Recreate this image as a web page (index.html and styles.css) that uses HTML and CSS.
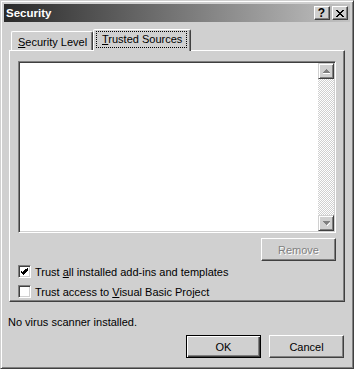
FILE: index.html
```html
<!DOCTYPE html>
<html lang="en">
<head>
	<meta charset="UTF-8">
	<title>Security</title>
	<link rel="stylesheet" href="styles.css">
</head>
<body>
<div class="window">
	<div class="titlebar">
		<span class="title">Security</span>
		<div class="caption-btns">
			<span class="cap-btn help">?</span>
			<span class="cap-btn close">
				<svg width="8" height="7" viewBox="0 0 8 7" shape-rendering="crispEdges"><path fill="#000" d="M0 0h2v1h-2zM6 0h2v1h-2zM1 1h2v1h-2zM5 1h2v1h-2zM2 2h4v1h-4zM3 3h2v1h-2zM2 4h4v1h-4zM1 5h2v1h-2zM5 5h2v1h-2zM0 6h2v1h-2zM6 6h2v1h-2z"/></svg>
			</span>
		</div>
	</div>
	<div class="body">
		<div class="tabs">
			<div class="tab"><u>S</u>ecurity Level</div>
			<div class="tab active"><span class="focus"><u>T</u>rusted Sources</span></div>
		</div>
		<div class="panel">
			<div class="listbox">
				<div class="list-area"></div>
				<div class="scrollbar">
					<div class="sb-btn"><svg width="7" height="5" viewBox="0 0 7 5" shape-rendering="crispEdges"><path fill="#808080" d="M3 0h1v1h1v1h1v1h1v1h-7v-1h1v-1h1v-1h1z"/><path fill="#fff" d="M0 4h7v1h-7z"/></svg></div>
					<div class="sb-track"></div>
					<div class="sb-btn"><svg width="7" height="5" viewBox="0 0 7 5" shape-rendering="crispEdges"><path fill="#808080" d="M0 0h7v1h-1v1h-1v1h-1v1h-1v-1h-1v-1h-1v-1h-1z"/><path fill="#fff" d="M4 4h1v-1h1v-1h1v1h-1v1h-1v1h-1z"/></svg></div>
				</div>
			</div>
			<div class="remove-row"><div class="btn disabled">Remove</div></div>
			<div class="check first">
				<span class="box"><svg width="7" height="7" viewBox="0 0 7 7" shape-rendering="crispEdges"><path fill="#000" d="M6 0h1v3h-1v1h-1v1h-1v1h-1v1h-1v-1h-1v-1h-1v-1h-1v-2h1v1h1v1h1v-1h1v-1h1v-1h1z"/></svg></span>
				<span>Trust <u>a</u>ll installed add-ins and templates</span>
			</div>
			<div class="check">
				<span class="box"></span>
				<span>Trust access to <u>V</u>isual Basic Project</span>
			</div>
		</div>
		<div class="status">No virus scanner installed.</div>
		<div class="buttons">
			<div class="btn default">OK</div>
			<div class="btn">Cancel</div>
		</div>
	</div>
</div>
</body>
</html>
```

FILE: styles.css
```css
body{
	margin: 0;
	padding: 0;
}
.window{
	width: 354px;
	height: 369px;
	box-sizing: border-box;
	border: 1px solid;
	border-color: #d0d0d0 #404040 #404040 #d0d0d0;
	box-shadow: inset 1px 1px #fff, inset -1px -1px #808080;
	padding: 3px;
	background: #d0d0d0;
	font-family: "Liberation Sans", Arial, sans-serif;
	font-size: 11px;
	color: #000;
	display: flex;
	flex-direction: column;
}
.titlebar{
	height: 18px;
	display: flex;
	align-items: center;
	justify-content: space-between;
	padding: 0 2px 0 2px;
	background: linear-gradient(to right, #2a2a2a, #c2c2c2);
}
.title{
	color: #fff;
	font-weight: bold;
	font-size: 11.5px;
}
.caption-btns{
	display: flex;
	gap: 2px;
}
.cap-btn{
	width: 16px;
	height: 14px;
	box-sizing: border-box;
	background: #d0d0d0;
	border: 1px solid;
	border-color: #fff #404040 #404040 #fff;
	box-shadow: inset -1px -1px #808080;
	display: flex;
	align-items: center;
	justify-content: center;
}
.help{
	font-weight: bold;
	font-size: 12px;
	line-height: 12px;
	padding-right: 1px;
}
.close svg{
	margin-right: 1px;
}
.body{
	flex: 1;
	display: flex;
	flex-direction: column;
	padding: 7px 5px 0 5px;
}
.tabs{
	height: 21px;
	display: flex;
	align-items: flex-end;
	padding-left: 2px;
}
.tab{
	width: 82px;
	height: 19px;
	box-sizing: border-box;
	border: 1px solid;
	border-bottom: none;
	border-color: #fff #404040 transparent #fff;
	border-radius: 2px 2px 0 0;
	box-shadow: inset -1px 0 #808080;
	display: flex;
	align-items: center;
	padding-left: 6px;
	padding-top: 1px;
}
.tab.active{
	width: 98px;
	height: 22px;
	margin-bottom: -1px;
	padding: 0 0 3px 3px;
	background: #d0d0d0;
	position: relative;
	z-index: 2;
}
.focus{
	outline: 1px dotted #000;
	padding: 1px 4px 2px 5px;
}
.panel{
	height: 252px;
	box-sizing: border-box;
	border: 1px solid;
	border-color: #fff #404040 #404040 #fff;
	box-shadow: inset -1px -1px #808080;
	padding: 10px 8px 0 8px;
	display: flex;
	flex-direction: column;
}
.listbox{
	height: 172px;
	box-sizing: border-box;
	border: 1px solid;
	border-color: #808080 #fff #fff #808080;
	box-shadow: inset 1px 1px #404040, inset -1px -1px #d0d0d0;
	padding: 1px;
	display: flex;
	background: #fff;
}
.list-area{
	flex: 1;
}
.scrollbar{
	width: 16px;
	display: flex;
	flex-direction: column;
}
.sb-btn{
	height: 16px;
	box-sizing: border-box;
	background: #d0d0d0;
	border: 1px solid;
	border-color: #d0d0d0 #404040 #404040 #d0d0d0;
	box-shadow: inset 1px 1px #fff, inset -1px -1px #808080;
	display: flex;
	align-items: center;
	justify-content: center;
}
.sb-track{
	flex: 1;
	background: repeating-conic-gradient(#fff 0 25%, #d0d0d0 0 50%) 0 0/2px 2px;
}
.remove-row{
	display: flex;
	justify-content: flex-end;
	margin-top: 5px;
}
.btn{
	width: 75px;
	height: 23px;
	box-sizing: border-box;
	background: #d0d0d0;
	border: 1px solid;
	border-color: #fff #404040 #404040 #fff;
	box-shadow: inset -1px -1px #808080;
	display: flex;
	align-items: center;
	justify-content: center;
}
.btn.disabled{
	color: #808080;
	text-shadow: 1px 1px #fff;
}
.btn.default{
	border-color: #000;
	box-shadow: inset 1px 1px #fff, inset -1px -1px #404040, inset -2px -2px #808080;
}
.check{
	display: flex;
	align-items: center;
	gap: 4px;
	height: 13px;
	margin-top: 7px;
}
.check.first{
	margin-top: 4px;
}
.box{
	width: 13px;
	height: 13px;
	box-sizing: border-box;
	background: #fff;
	border: 1px solid;
	border-color: #808080 #fff #fff #808080;
	box-shadow: inset 1px 1px #404040, inset -1px -1px #d0d0d0;
	display: flex;
	align-items: center;
	justify-content: center;
}
.status{
	margin-top: 14px;
	margin-left: -1px;
	line-height: 13px;
}
.buttons{
	display: flex;
	justify-content: flex-end;
	gap: 8px;
	margin-top: 6px;
	padding-right: 1px;
}
```
